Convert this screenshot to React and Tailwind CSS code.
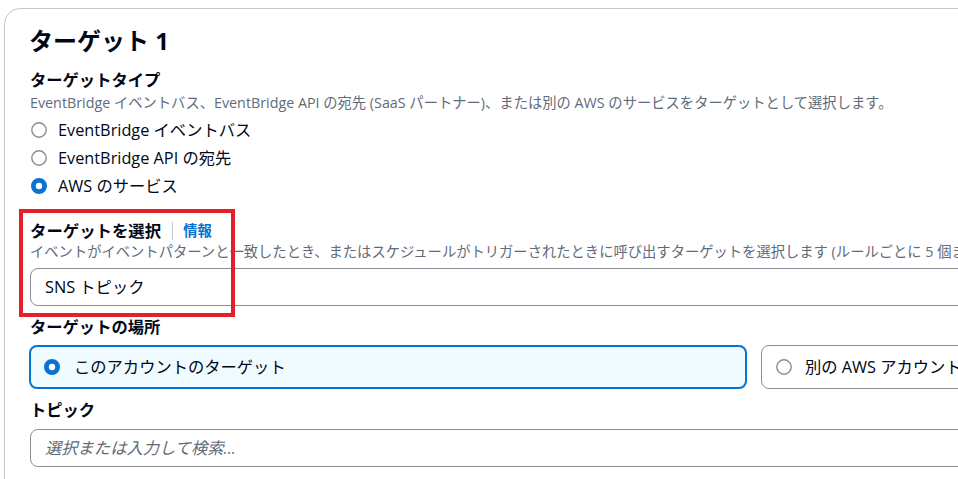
import React from "react";

const font = { fontFamily: '"Open Sans", "Noto Sans CJK JP", sans-serif' };

function Radio({ checked }) {
  return checked ? (
    <svg width="16" height="16" viewBox="0 0 16 16" className="shrink-0">
      <circle cx="8" cy="8" r="5.6" fill="#fff" stroke="#0972d3" strokeWidth="4.8" />
    </svg>
  ) : (
    <svg width="16" height="16" viewBox="0 0 16 16" className="shrink-0">
      <circle cx="8" cy="8" r="7.2" fill="#fff" stroke="#8c8c94" strokeWidth="1.4" />
    </svg>
  );
}

function RadioRow({ checked, children }) {
  return (
    <div className="flex items-center h-[28px] pl-[1px]">
      <Radio checked={checked} />
      <span className="ml-[11px] text-[16.3px] leading-[22px] text-[#000716]">{children}</span>
    </div>
  );
}

export default function App() {
  return (
    <div className="relative w-full h-[479px] overflow-hidden bg-white" style={font}>
      <div className="mt-[8px] ml-[4px] w-[1600px] h-[600px] border border-[#c6c6cd] rounded-[16px] bg-white pl-[25px] pt-[17px]">
        <div className="text-[24px] leading-[30px] font-bold text-[#000716] -ml-[1px]">ターゲット 1</div>

        <div className="mt-[13px] text-[16.3px] leading-[22px] font-bold text-[#000716]">ターゲットタイプ</div>
        <div className="mt-[2px] text-[14.3px] leading-[20px] text-[#5f6b7a] whitespace-nowrap">
          EventBridge イベントバス、EventBridge API の宛先 (SaaS パートナー)、または別の AWS のサービスをターゲットとして選択します。
        </div>

        <div className="mt-[3px] flex flex-col">
          <RadioRow>EventBridge イベントバス</RadioRow>
          <RadioRow>EventBridge API の宛先</RadioRow>
          <RadioRow checked>AWS のサービス</RadioRow>
        </div>

        <div className="mt-[20px] flex items-center h-[22px]">
          <span className="text-[16.4px] leading-[22px] font-bold text-[#000716]">ターゲットを選択</span>
          <span className="ml-[11px] w-px h-[18px] bg-[#c6c6cd]" />
          <span className="ml-[10px] text-[14.3px] leading-[20px] font-bold text-[#0972d3]">情報</span>
        </div>
        <div className="mt-[0px] text-[14.3px] leading-[20px] text-[#5f6b7a] whitespace-nowrap">
          イベントがイベントパターンと一致したとき、またはスケジュールがトリガーされたときに呼び出すターゲットを選択します (ルールごとに 5 個まで)。
        </div>
        <div className="mt-[6px] w-[1500px] h-[38px] border border-[#8c8c94] rounded-[8px] flex items-center pl-[14px] text-[16.3px] text-[#000716]">
          SNS トピック
        </div>

        <div className="mt-[10px] text-[16.3px] leading-[22px] font-bold text-[#000716]">ターゲットの場所</div>
        <div className="mt-[7px] -ml-[1px] flex gap-[14px]">
          <div className="w-[718px] h-[44px] border-2 border-[#0972d3] rounded-[8px] bg-[#f0fbff] flex items-center pl-[13px]">
            <Radio checked />
            <span className="ml-[14px] text-[16.3px] leading-[22px] text-[#000716]">このアカウントのターゲット</span>
          </div>
          <div className="w-[718px] h-[44px] border border-[#8c8c94] rounded-[8px] bg-white flex items-center pl-[14px]">
            <Radio />
            <span className="ml-[13px] text-[16.3px] leading-[22px] text-[#000716]">別の AWS アカウントのターゲット</span>
          </div>
        </div>

        <div className="mt-[10px] text-[16.3px] leading-[22px] font-bold text-[#000716]">トピック</div>
        <div className="mt-[8px] w-[1500px] h-[38px] border border-[#8c8c94] rounded-[8px] flex items-center pl-[14px] text-[16.3px] italic text-[#5f6b7a]">
          選択または入力して検索...
        </div>
      </div>

      <div className="absolute left-[19px] top-[209px] w-[216px] h-[108px] border-4 border-[#e5202a] pointer-events-none" />
    </div>
  );
}
